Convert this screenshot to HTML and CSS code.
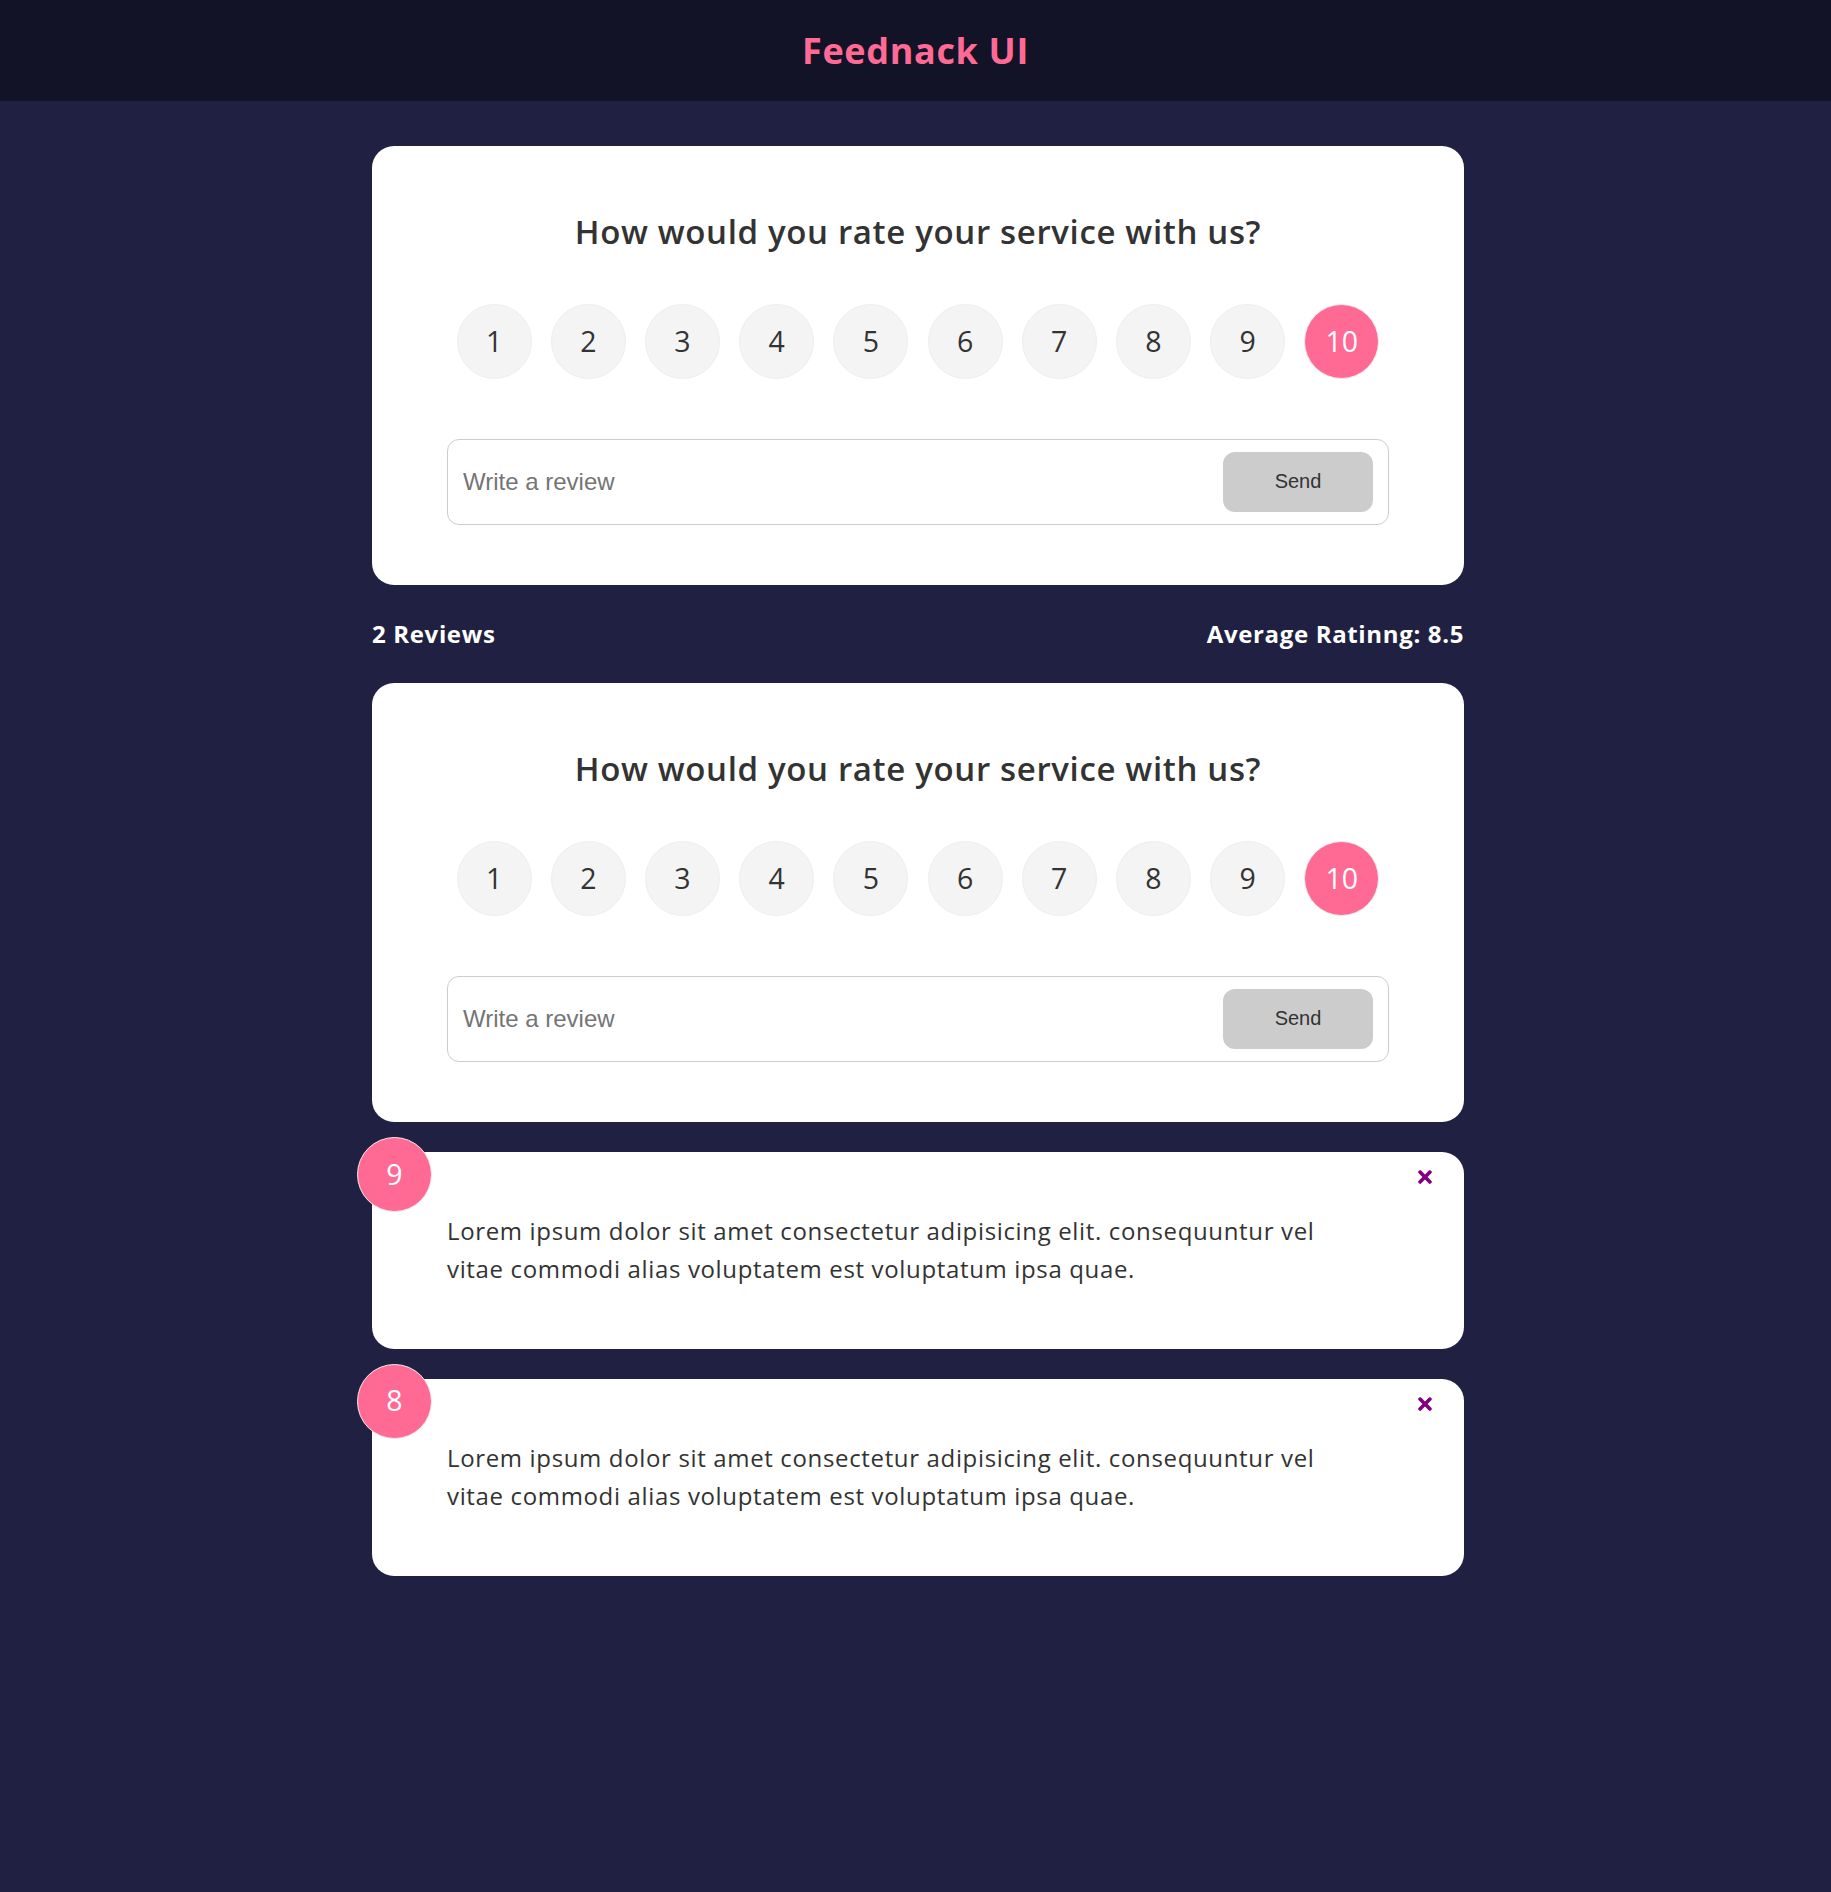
FILE: index.html
```html
<!DOCTYPE html>
<html lang="en">
<head>
  <meta charset="UTF-8" />
  <meta name="viewport" content="width=device-width, initial-scale=1.0" />
  <title>Feednack UI</title>
  <link rel="stylesheet" href="styles.css">
</head>
<body>
  <header>
    <h2>Feednack UI</h2>
  </header>

  <div class="container">
    <div class="card">
      <form>
        <h2>How would you rate your service with us?</h2>
        <ul class="rating">
          <li>1</li>
          <li>2</li>
          <li>3</li>
          <li>4</li>
          <li>5</li>
          <li>6</li>
          <li>7</li>
          <li>8</li>
          <li>9</li>
          <li class="selected">10</li>
        </ul>
        <div class="input-group">
          <input type="text" placeholder="Write a review" />
          <button type="submit" class="btn" disabled>Send</button>
        </div>
      </form>
    </div>

    <div class="feedback-stats">
      <h4>2 Reviews</h4>
      <h4>Average Ratinng: 8.5</h4>
    </div>

    <div class="card">
      <form>
        <h2>How would you rate your service with us?</h2>
        <ul class="rating">
          <li>1</li>
          <li>2</li>
          <li>3</li>
          <li>4</li>
          <li>5</li>
          <li>6</li>
          <li>7</li>
          <li>8</li>
          <li>9</li>
          <li class="selected">10</li>
        </ul>
        <div class="input-group">
          <input type="text" placeholder="Write a review" />
          <button type="submit" class="btn" disabled>Send</button>
        </div>
      </form>
    </div>

    <div class="feedback-list">
      <div class="card">
        <div class="num-display">9</div>
        <button class="close">
          <svg viewBox="0 0 352 512" width="14" height="20"><path fill="currentColor" d="M242.72 256l100.07-100.07c12.28-12.28 12.28-32.19 0-44.48l-22.24-22.24c-12.28-12.28-32.19-12.28-44.48 0L176 189.28 75.93 89.21c-12.28-12.28-32.19-12.28-44.48 0L9.21 111.45c-12.28 12.28-12.28 32.19 0 44.48L109.28 256 9.21 356.07c-12.28 12.28-12.28 32.19 0 44.48l22.24 22.24c12.28 12.28 32.2 12.28 44.48 0L176 322.72l100.07 100.07c12.28 12.28 32.2 12.28 44.48 0l22.24-22.24c12.28-12.28 12.28-32.19 0-44.48L242.72 256z"/></svg>
        </button>
        <div class="text-display">Lorem ipsum dolor sit amet consectetur adipisicing elit. consequuntur vel vitae commodi alias voluptatem est voluptatum ipsa quae.</div>
      </div>
      <div class="card">
        <div class="num-display">8</div>
        <button class="close">
          <svg viewBox="0 0 352 512" width="14" height="20"><path fill="currentColor" d="M242.72 256l100.07-100.07c12.28-12.28 12.28-32.19 0-44.48l-22.24-22.24c-12.28-12.28-32.19-12.28-44.48 0L176 189.28 75.93 89.21c-12.28-12.28-32.19-12.28-44.48 0L9.21 111.45c-12.28 12.28-12.28 32.19 0 44.48L109.28 256 9.21 356.07c-12.28 12.28-12.28 32.19 0 44.48l22.24 22.24c12.28 12.28 32.2 12.28 44.48 0L176 322.72l100.07 100.07c12.28 12.28 32.2 12.28 44.48 0l22.24-22.24c12.28-12.28 12.28-32.19 0-44.48L242.72 256z"/></svg>
        </button>
        <div class="text-display">Lorem ipsum dolor sit amet consectetur adipisicing elit. consequuntur vel vitae commodi alias voluptatem est voluptatum ipsa quae.</div>
      </div>
    </div>
  </div>
</body>
</html>
```

FILE: styles.css
```css
* {
  box-sizing: border-box;
  margin: 0;
  padding: 0;
}
body {
  font-family: "Open Sans", Arial, sans-serif;
  background-color: #202142;
  line-height: 1.6;
  letter-spacing: 0.65px;
  min-height: 1892px;
}
ul {
  list-style: none;
}
header {
  height: 101px;
  display: flex;
  align-items: center;
  justify-content: center;
  background-color: rgba(0, 0, 0, 0.4);
  color: #ff6a95;
}
header h2 {
  font-size: 36px;
  font-weight: 700;
}
.container {
  max-width: 1157px;
  margin: auto;
  padding: 15px 30px 0 35px;
}
.card {
  background-color: #fff;
  color: #333;
  border-radius: 22px;
  padding: 60px 75px;
  margin: 30px 0;
  position: relative;
}
.card h2 {
  font-size: 33px;
  font-weight: 600;
  text-align: center;
}
.rating {
  display: flex;
  align-items: center;
  justify-content: space-around;
  margin: 45px 0 60px;
}
.rating li,
.num-display {
  background: #f4f4f4;
  width: 75px;
  height: 75px;
  border-radius: 50%;
  border: 1.5px solid #eee;
  font-size: 28.5px;
  letter-spacing: 0;
  display: flex;
  align-items: center;
  justify-content: center;
}
.rating li.selected,
.num-display {
  background: #ff6a95;
  color: #fff;
}
.input-group {
  display: flex;
  align-items: center;
  border: 1.5px solid #ccc;
  padding: 12px 15px;
  border-radius: 12px;
}
.input-group input {
  flex-grow: 2;
  border: none;
  outline: none;
  font-family: "Liberation Sans", Arial, sans-serif;
  font-size: 24px;
  letter-spacing: 0;
  color: #333;
}
.input-group input::placeholder {
  color: #757575;
}
.btn {
  border: 0;
  border-radius: 12px;
  width: 150px;
  height: 60px;
  font-family: "Liberation Sans", Arial, sans-serif;
  font-size: 20px;
  letter-spacing: 0;
}
.btn:disabled {
  background-color: #cccccc;
  color: #333;
}
.feedback-stats {
  display: flex;
  justify-content: space-between;
  align-items: center;
  color: #fff;
}
.feedback-stats h4 {
  font-size: 24px;
  font-weight: 700;
}
.num-display {
  position: absolute;
  top: -15px;
  left: -15px;
}
.close {
  position: absolute;
  top: 15px;
  right: 32px;
  padding: 0;
  background: none;
  border: none;
  color: purple;
  cursor: pointer;
}
.close svg {
  display: block;
}
.text-display {
  font-size: 24px;
  padding-right: 30px;
}
```
